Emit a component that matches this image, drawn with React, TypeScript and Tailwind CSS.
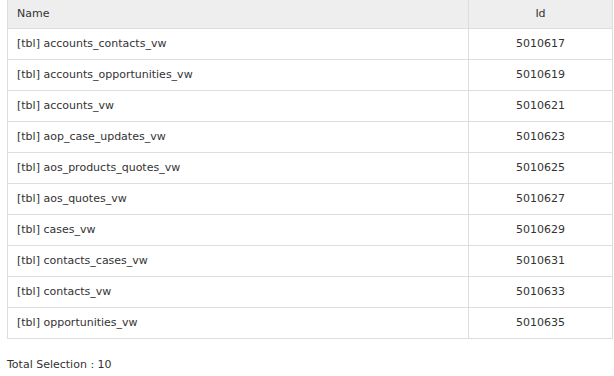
import React from 'react';

type Row = { name: string; id: number };

const ROWS: Row[] = [
  { name: 'accounts_contacts_vw', id: 5010617 },
  { name: 'accounts_opportunities_vw', id: 5010619 },
  { name: 'accounts_vw', id: 5010621 },
  { name: 'aop_case_updates_vw', id: 5010623 },
  { name: 'aos_products_quotes_vw', id: 5010625 },
  { name: 'aos_quotes_vw', id: 5010627 },
  { name: 'cases_vw', id: 5010629 },
  { name: 'contacts_cases_vw', id: 5010631 },
  { name: 'contacts_vw', id: 5010633 },
  { name: 'opportunities_vw', id: 5010635 },
];

const App: React.FC = () => {
  return (
    <div className="min-h-screen bg-white text-[#333333] text-[11px] font-['DejaVu_Sans',sans-serif] pl-[7px] pr-px">
      <table className="w-full border-collapse border-x border-b border-[#dddddd]">
        <thead>
          <tr className="bg-[#eeeeee] h-[28px]">
            <th className="border-b border-r border-[#dddddd] text-left font-normal pl-[9px] pt-px">Name</th>
            <th className="border-b border-[#dddddd] font-normal w-[144px] pt-px">Id</th>
          </tr>
        </thead>
        <tbody>
          {ROWS.map((row) => (
            <tr key={row.id} className="h-[31px]">
              <td className="border-b border-r border-[#dddddd] pl-[9px] pt-px">[tbl] {row.name}</td>
              <td className="border-b border-[#dddddd] text-center pt-px">{row.id}</td>
            </tr>
          ))}
        </tbody>
      </table>
      <p className="mt-[18px]">Total Selection : {ROWS.length}</p>
    </div>
  );
};

export default App;
